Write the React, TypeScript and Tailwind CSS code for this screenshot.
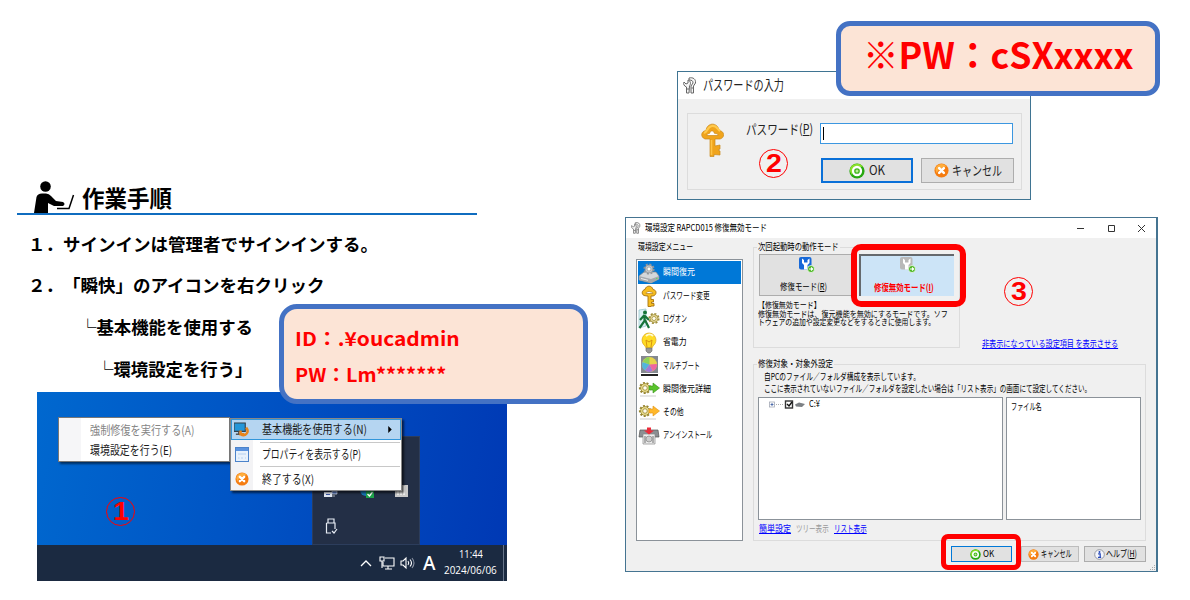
import { useLayoutEffect, useRef, useState, type ReactNode } from "react";

/** A single line of text condensed or widened to a given width. */
function T({ w, className = "", children }: { w: number; className?: string; children: ReactNode }) {
  const ref = useRef<HTMLSpanElement>(null);
  const [scale, setScale] = useState(1);
  useLayoutEffect(() => {
    if (ref.current) setScale(w / ref.current.offsetWidth);
  }, [w]);
  return (
    <span className={`block shrink-0 whitespace-nowrap ${className}`} style={{ width: w }}>
      <span ref={ref} className="inline-block origin-left" style={{ transform: `scaleX(${scale})` }}>
        {children}
      </span>
    </span>
  );
}

const OkIcon = ({ className = "" }: { className?: string }) => (
  <svg viewBox="0 0 16 16" className={className}>
    <circle cx="8" cy="8" r="7.6" fill="#27a810" />
    <path d="M1 6a7.3 7.3 0 0 1 13-2C10 3 5 6 3 12A7 7 0 0 1 1 6Z" fill="#8be02a" />
    <circle cx="8" cy="8" r="4" fill="#3fb51c" stroke="#fff" strokeWidth="2.300" />
    <circle cx="8" cy="8" r="1.500" fill="#b9ec94" />
  </svg>
);
const CancelIcon = ({ className = "" }: { className?: string }) => (
  <svg viewBox="0 0 16 16" className={className}>
    <circle cx="8" cy="8" r="7.5" fill="#f57c10" />
    <path d="M1.5 7a6.7 6.7 0 0 1 12-3.2C9 4 4 7 3 11Z" fill="#ffae3d" />
    <path d="M5.500 5.500l5 5M10.500 5.500l-5 5" stroke="#fff" strokeWidth="2.700" strokeLinecap="round" />
  </svg>
);
const InfoIcon = ({ className = "" }: { className?: string }) => (
  <svg viewBox="0 0 16 16" className={className}>
    <circle cx="8" cy="8" r="7" fill="#f4f6fb" stroke="#8b8f98" strokeWidth="1.3" />
    <circle cx="8" cy="4.3" r="1.4" fill="#2446b8" />
    <path d="M6 7h3v5M5.8 12.3h4.6" stroke="#2446b8" strokeWidth="1.8" fill="none" />
  </svg>
);
const ToolIcon = ({ className = "" }: { className?: string }) => (
  <svg viewBox="0 0 14 17" className={className} fill="#f6f6f6" stroke="#666" strokeWidth="1">
    <path d="M1 5l2 2 2-1 0-3C8 4 8 7 6.500 9L6 16H3.500L3.500 10C1 9 0 7 1 5Z" />
    <path d="M6 1c4-1 7 1 6.500 5L10.500 9v7H8V9l2-3C10 4 9 3 6 3Z" />
    <path d="M8.500 11h2M4 12h2" />
  </svg>
);
const KeyIcon = ({ className = "" }: { className?: string }) => (
  <svg viewBox="0 0 23 34" className={className}>
    <path
      d="M9 16L4 16C-1 14 0 8 5 7.500C6-1 17-1 18 7.500C24 8 24 15 19 16H14V23L19 22V26L17 27L19 28V32L13 31.500V33.500H9Z"
      fill="#f0a41c" stroke="#c98a1c" strokeWidth=".7" />
    <path d="M3 9.500c3 1 3-6 8-6.500s5 3 8 5" stroke="#ffc94c" strokeWidth="2.200" fill="none" />
    <path d="M6 12.500c0-3 3-1 3-3s4-2 4 0 4 0 4 3Z" fill="#fff" stroke="#c98a1c" strokeWidth=".7" />
    <path d="M10.500 17v15" stroke="#ffc445" strokeWidth="1.600" />
  </svg>
);
const Wrench = ({ off = false, className = "" }: { off?: boolean; className?: string }) => (
  <svg viewBox="0 0 17 17" className={className}>
    <rect x="1" y="1" width="12.500" height="12.500" rx="2" fill={off ? "#b9b9b9" : "#1769d8"} />
    <path d="M4 2.500v4.500l2 2v4.500h3.500V9l2-2V2.500L9.500 4v2.500H6V4Z" fill="#fff" />
    <circle cx="13" cy="13" r="3.500" fill="#47b51d" stroke="#fff" strokeWidth=".7" />
    <path d="M11 13h3M13 11.500l1.700 1.500L13 14.500" stroke="#fff" strokeWidth="1.100" fill="none" />
  </svg>
);

const gear = (cx: number, cy: number, r: number, fill: string, line: string) => (
  <g>
    <circle cx={cx} cy={cy} r={r} fill="none" stroke={line} strokeWidth="2.2" strokeDasharray="1.900 1.600" />
    <circle cx={cx} cy={cy} r={r - 0.6} fill={fill} stroke={line} strokeWidth=".8" />
    <circle cx={cx} cy={cy} r={r / 2.2} fill="#fffdf0" stroke={line} strokeWidth=".8" />
  </g>
);
const menuIcons: ReactNode[] = [
  <>
    <path d="M1 14L6 10H18L21 14V17L13 21L1 18Z" fill="#d4d7da" stroke="#888" strokeWidth=".7" />
    <path d="M1 14L13 17V21L1 18ZM13 17L21 14V17L13 21Z" fill="#a4a9ae" />
    <path d="M3 16.500l7 1.800" stroke="#eee" />
    <path d="M18 16.500h1.500" stroke="#5fe35a" />
    {gear(11, 7, 4.5, "#c7cbcf", "#8f959a")}
  </>,
  <>
    <path d="M9 11L6 10.500C3 9 4 5 7 4.500C8 0 14 0 15 4.500C19 5 19 10 15 11H13V14.500H15.500V17H13.500V18.500H16V21H13V21.500H10V11Z" fill="#f7bd20" stroke="#a5720d" strokeWidth=".9" />
    <path d="M8 8.500c0-2 2-1 2-2h2c0 1 3 0 3 2Z" fill="#fff" stroke="#a5720d" strokeWidth=".6" />
  </>,
  <>
    <path d="M1 2L8 1V18L1 20Z" fill="#dcf1f4" stroke="#8fc2ca" strokeWidth=".7" />
    <circle cx="7" cy="4.500" r="2" fill="#167439" />
    <path d="M6.500 7L2 12M6.500 7v6l-5 7M7 12l4 8M7 8l4 4" stroke="#167439" strokeWidth="2.200" fill="none" />
    {gear(16, 10.500, 4.500, "#eee0a0", "#a08f3c")}
  </>,
  <>
    <path d="M7 14C1 9 5 1 11 1S21 9 15 14L14 16H8Z" fill="#ffdc25" stroke="#dda51b" strokeWidth=".7" />
    <path d="M8 4c2-2 5-2 7 0" stroke="#fffbd0" strokeWidth="2" fill="none" />
    <path d="M9 15L8 8l3 2 3-2-1 7" stroke="#d79411" fill="none" />
    <path d="M8 16h6v3l-2 2h-2l-2-2Z" fill="#999" stroke="#666" strokeWidth=".6" />
  </>,
  <>
    <rect x="3" y="1" width="17" height="17" fill="#858990" />
    <circle cx="11.500" cy="9.500" r="7.500" fill="#e8d44a" />
    <path d="M11.500 9.500V2A7.500 7.500 0 0 0 5 7Z" fill="#8bd45a" />
    <path d="M11.500 9.500L4.500 7A7.500 7.500 0 0 0 7 15.500Z" fill="#52b5dc" />
    <path d="M11.500 9.500L7 15.500A7.500 7.500 0 0 0 15 16Z" fill="#a07ad8" />
    <path d="M11.500 9.500L15 16A7.500 7.500 0 0 0 19 9Z" fill="#ef65a0" />
    <path d="M3 20h17" stroke="#222" strokeWidth="2" />
  </>,
  <>
    {gear(7, 10, 5, "#ecdf91", "#96842f")}
    <path d="M11 8h4V5l6.500 5L15 15v-3h-4Z" fill="#59c42b" stroke="#369018" strokeWidth=".6" />
    <path d="M2 18h16" stroke="#dedede" strokeWidth="1.500" />
  </>,
  <>
    {gear(7, 10, 5, "#ecdf91", "#96842f")}
    <path d="M11 8h4V5l6.500 5L15 15v-3h-4Z" fill="#ffb82b" stroke="#e09010" strokeWidth=".6" />
    <path d="M2 18h16" stroke="#dedede" strokeWidth="1.500" />
  </>,
  <>
    <path d="M2 5H20L21 12H1Z" fill="#8c8f93" stroke="#555" strokeWidth=".7" />
    <path d="M5 9h12v10H5Z" fill="#eee" stroke="#888" strokeWidth=".7" />
    <path d="M7 11v7M15 11v7" stroke="#999" strokeWidth="1.500" />
    <circle cx="11" cy="14" r="3" fill="#ccc" stroke="#777" strokeWidth=".6" />
    <path d="M9 2.500h4v3h3l-5 4-5-4h3Z" fill="#ec2c3b" />
  </>,
];

const menu: [string, number][] = [
  ["瞬間復元", 32],
  ["パスワード変更", 47],
  ["ログオン", 24],
  ["省電力", 24],
  ["マルチブート", 37],
  ["瞬間復元詳細", 48],
  ["その他", 21],
  ["アンインストール", 49],
];

function Circled({ n, className }: { n: string; className: string }) {
  return (
    <div className={`absolute flex h-[29px] w-[29px] items-center justify-center rounded-full border-[1.5px] border-[#f00] font-['Liberation_Sans',sans-serif] text-[25px] leading-none font-bold text-[#f00] ${className}`}>
      <T w={16}>{n}</T>
    </div>
  );
}

function Procedure() {
  return (
    <section className="absolute top-0 left-0 flex w-[480px] flex-col font-bold text-black">
      <header className="ml-[17px] flex h-[215px] w-[460px] items-end border-b-2 border-[#0f6cbf]">
        <svg viewBox="0 0 42 32" className="ml-[16px] h-[32px] w-[42px]">
          <circle cx="12.500" cy="5.500" r="5.300" />
          <path d="M1 32L3.500 16Q4.500 12.500 9 12.500H13Q16 12.500 18 15L23 20L30 21Q33 23 30 25H21L15 22V32Z" />
          <path d="M24 27.500H36L40.500 14" fill="none" stroke="#000" strokeWidth="1.500" />
        </svg>
        <T w={90} className="ml-[7px] pb-[5px] text-[22.500px] leading-[22px]">作業手順</T>
      </header>
      <div className="flex h-[41px] items-center pt-[16px] pl-[28px] text-[17.500px] leading-none">
        <T w={350}>１．サインインは管理者でサインインする。</T>
      </div>
      <div className="flex h-[42px] items-center pt-[16px] pl-[28px] text-[17.500px] leading-none">
        <T w={297}>２．「瞬快」のアイコンを右クリック</T>
      </div>
      <div className="flex h-[42px] items-center pt-[16px] pl-[79px] text-[17.500px] leading-none">
        <T w={174}>└基本機能を使用する</T>
      </div>
      <div className="flex h-[42px] items-center pt-[16px] pl-[96px] text-[17.500px] leading-none">
        <T w={157}>└環境設定を行う」</T>
      </div>
    </section>
  );
}

function Desktop() {
  return (
    <section className="absolute top-[392px] left-[37px] flex h-[189px] w-[470px] flex-col justify-end bg-[linear-gradient(100deg,#0068cf_0%,#0053c4_45%,#0038b4_100%)]">
      <div className="absolute top-[44px] left-[275px] flex h-[109px] w-[108px] flex-col border border-[#2c3d5c] bg-[#232f46] px-[11px] pt-[48px]">
        <div className="flex h-[16px] justify-between">
          <svg viewBox="0 0 14 16" className="w-[14px]"><path d="M0 7h8v5H0Z" fill="#dfe6f1" /><path d="M2 9h4v1H2Z" fill="#3c57a0" /><path d="M8 6h5v3H8ZM8 11h3" fill="#5778c0" stroke="#fff" strokeWidth=".6" /></svg>
          <svg viewBox="0 0 16 16" className="w-[16px]"><circle cx="7" cy="5" r="6" fill="#1776b4" /><rect x="7" y="5" width="8" height="8" fill="#1da34a" /><path d="M8.500 9l2 2 3-4" fill="none" stroke="#fff" strokeWidth="1.300" /></svg>
          <svg viewBox="0 0 13 16" className="w-[13px]"><rect y="0" width="13" height="12" fill="#cacaca" /><path d="M3 5v5M6 3v7M9 1v9" stroke="#eee" strokeWidth="2" /></svg>
        </div>
        <svg viewBox="0 0 14 17" className="mt-[17px] h-[17px] w-[14px]" fill="none" stroke="#e8edf5" strokeWidth="1.200"><path d="M4 5V1h6v4M2.500 5h8.500v6M2.500 5v10H7M8 13l2 2 3-4" /></svg>
      </div>
      <div className="absolute top-[25px] left-[21px] flex h-[45px] w-[172px] border border-[#777] bg-white text-[12px] leading-none shadow-[2px_2px_2px_#0008]">
        <div className="w-[22px] bg-[#f6f6f8]" />
        <div className="flex flex-col justify-center gap-[8px] pl-[9px]">
          <T w={104} className="text-[#858585]">強制修復を実行する(A)</T>
          <T w={82} className="text-[#1a1a1a]">環境設定を行う(E)</T>
        </div>
      </div>
      <div className="absolute top-[26px] left-[193px] flex h-[73px] w-[172px] flex-col border border-[#888] bg-white text-[12px] leading-none text-[#1a1a1a] shadow-[2px_2px_2px_#0009]">
        <div className="flex h-[21px] shrink-0 items-center border border-[#3296da] bg-[#b5d5f1] pl-[2px]">
          <svg viewBox="0 0 16 16" className="h-[15px] w-[15px]"><path d="M0 1h12v9H0Z" fill="#2596d8" stroke="#34424d" strokeWidth="1.200" /><path d="M5 10v3M2 13h8" stroke="#555" strokeWidth="1.500" /><path d="M13 6c4 5-1 10-6 7M7 9v4h4" fill="none" stroke="#e8851c" strokeWidth="2.600" /></svg>
          <T w={105} className="ml-[13px] pb-px">基本機能を使用する(N)</T>
          <svg viewBox="0 0 4 8" className="ml-[21px] h-[7px] w-[4px]"><path d="M0 0L4 4L0 8Z" /></svg>
        </div>
        <div className="flex h-[28px] items-center">
          <div className="flex h-full w-[22px] items-center justify-center bg-[#f3f3f5]">
            <svg viewBox="0 0 14 15" className="h-[15px] w-[14px]"><rect x=".5" y=".5" width="13" height="14" fill="#e7f1fc" stroke="#4c83ca" /><path d="M1 1h12v3H1Z" fill="#5b93df" /><path d="M3 7h8M3 11h1.500M6 11h2M10 11h1" stroke="#b5d0f0" /></svg>
          </div>
          <div className="ml-[7px] flex h-[25px] w-[140px] items-center border-y border-[#c8c8c8] pl-[2px]"><T w={99} className="pb-px">プロパティを表示する(P)</T></div>
        </div>
        <div className="flex flex-1 items-center">
          <div className="flex h-full w-[22px] items-center justify-center bg-[#f3f3f5]"><CancelIcon className="h-[14px] w-[14px]" /></div>
          <T w={52} className="ml-[9px] pb-px">終了する(X)</T>
        </div>
      </div>
      <Circled n="1" className="top-[105px] left-[69px]" />
      <footer className="flex h-[36px] items-center bg-[#1b2a41] pl-[323px] text-white">
        <svg viewBox="0 0 12 8" className="h-[8px] w-[12px]" fill="none" stroke="#fff" strokeWidth="1.300"><path d="M1 7L6 2L11 7" /></svg>
        <svg viewBox="0 0 16 14" className="ml-[7px] h-[14px] w-[16px]" fill="none" stroke="#fff" strokeWidth="1.100"><path d="M6 2h9v8H4V6M9 10v3M6 13h7" /><path d="M1 1h4v4H1ZM3 5v7" /></svg>
        <svg viewBox="0 0 15 14" className="ml-[5px] h-[14px] w-[15px]" fill="none" stroke="#fff" strokeWidth="1.100"><path d="M1 5h2l3-3v10L3 9H1ZM8 5q1.500 2 0 4M10 3.500q3 3.500 0 7" /><path d="M12 2q4 5 0 10" stroke="#8a93a3" /></svg>
        <T w={12} className="ml-[8px] font-['Noto_Sans'] text-[19px] leading-none font-medium">A</T>
        <div className="ml-[9px] flex flex-col items-center gap-[6px] pb-[2px] font-['Open_Sans',sans-serif] text-[10.500px] leading-none">
          <T w={24}>11:44</T>
          <T w={53}>2024/06/06</T>
        </div>
        <div className="ml-[6px] h-full w-px bg-[#68758a]" />
      </footer>
    </section>
  );
}

function PasswordDialog() {
  return (
    <section className="absolute top-[71px] left-[677px] flex h-[129px] w-[354px] flex-col border border-[#3f7492] bg-[#f0f0f0] text-[#222]">
      <header className="flex h-[27px] shrink-0 items-center bg-white pl-[5px] text-[13.500px] leading-none">
        <ToolIcon className="h-[17px] w-[14px]" />
        <T w={81} className="ml-[6px] pb-[2px]">パスワードの入力</T>
      </header>
      <div className="mt-[14px] ml-[9px] flex h-[77px] w-[335px] border border-[#dcdcdc]">
        <KeyIcon className="mt-[9px] ml-[13px] h-[34px] w-[23px]" />
        <div className="ml-[22px] flex flex-col">
          <div className="flex h-[30px] items-end text-[13px] leading-none">
            <T w={67} className="mb-[9px]">パスワード(<u>P</u>)</T>
            <div className="ml-[7px] flex h-[21px] w-[193px] items-center border-[1.5px] border-[#3c97e0] bg-white pl-[2px]"><i className="h-[13px] w-px bg-black" /></div>
          </div>
          <div className="mt-[14px] ml-[75px] flex gap-[8px] text-[13px] leading-none">
            <div className="flex h-[25px] w-[92px] items-center justify-center gap-[4px] border-2 border-[#0a70d8] bg-[#e1e1e1]"><OkIcon className="h-[16px] w-[16px]" /><T w={16} className="pb-[3px]">OK</T></div>
            <div className="flex h-[25px] w-[93px] items-center justify-center gap-[3px] border border-[#adadad] bg-[#e1e1e1]"><CancelIcon className="h-[15px] w-[15px]" /><T w={50} className="pb-[2px]">キャンセル</T></div>
          </div>
        </div>
      </div>
      <Circled n="2" className="top-[77px] left-[81px]" />
    </section>
  );
}

function SettingsWindow() {
  return (
    <section className="absolute top-[217px] left-[625px] flex h-[355px] w-[533px] flex-col border border-r-2 border-[#457491] bg-[#f0f0f0] text-[9.500px] leading-none text-black">
      <header className="flex h-[20px] shrink-0 items-center bg-white pl-[5px]">
        <ToolIcon className="h-[12px] w-[10px]" />
        <T w={122} className="ml-[4px]">環境設定 RAPCD015 修復無効モード</T>
        <svg viewBox="0 0 70 9" className="ml-[310px] h-[9px] w-[70px]" fill="none" stroke="#333"><path d="M0 4.500h7M31.500 1.500h6v6h-6ZM61 1l7 7M68 1l-7 7" /></svg>
      </header>
      <div className="flex pl-[10px]">
        <aside className="flex w-[107px] flex-col">
          <div className="flex h-[21px] items-start pt-[4px] pl-[2px]"><T w={55}>環境設定メニュー</T></div>
          <div className="flex h-[282px] flex-col border border-[#8b9299] bg-white px-px pt-px">
            {menu.map(([label, w], i) => (
              <div key={label} className={`flex h-[23.300px] shrink-0 items-center ${i === 0 ? "bg-[#0078d7] text-white" : ""}`}>
                <svg viewBox="0 0 22 22" className="h-[22px] w-[22px]">{menuIcons[i]}</svg>
                <T w={w} className="ml-[3px] pb-px">{label}</T>
              </div>
            ))}
          </div>
        </aside>
        <main className="ml-[10px] flex w-[393px] flex-col pt-[9px]">
          <div className="flex h-[101px] items-end">
            <div className="flex h-[101px] w-[207px] flex-col border border-[#dcdcdc]">
              <div className="-mt-[6px] ml-[3px] h-[10px] w-fit bg-[#f0f0f0] px-px"><T w={81}>次回起動時の動作モード</T></div>
              <div className="mt-[2px] ml-[5px] flex gap-[5px]">
                <div className="flex h-[42px] w-[95px] flex-col items-center justify-between border border-[#adadad] bg-[#e1e1e1] pt-px pb-[4px]">
                  <Wrench className="h-[17px] w-[17px]" /><T w={47} className="-ml-[6px]">修復モード(<u>R</u>)</T>
                </div>
                <div className="flex h-[42px] w-[95px] flex-col items-center justify-between border-t-2 border-l-2 border-[#65696d] bg-[#cce4f7] pb-[4px] font-bold text-[#f00]">
                  <Wrench off className="h-[17px] w-[17px]" /><T w={60} className="-ml-[8px]">修復無効モード(<u>I</u>)</T>
                </div>
              </div>
              <div className="mt-[4px] ml-[4px] flex flex-col text-[8.500px] leading-[8.700px]">
                <T w={63}>【修復無効モード】</T>
                <T w={190}>修復無効モードは、復元機能を無効にするモードです。ソフ</T>
                <T w={177}>トウェアの追加や設定変更などをするときに使用します。</T>
              </div>
            </div>
            <T w={136} className="ml-[22px] text-[#00f] [&>span]:underline">非表示になっている設定項目 を表示させる</T>
          </div>
          <div className="mt-[16px] flex h-[177px] w-[393px] flex-col border border-[#dcdcdc]">
            <div className="-mt-[6px] ml-[3px] h-[10px] w-fit bg-[#f0f0f0] px-px"><T w={75}>修復対象・対象外設定</T></div>
            <div className="mt-[2px] ml-[10px] flex flex-col leading-[11.500px]">
              <T w={156}>自PCのファイル／フォルダ構成を表示しています。</T>
              <T w={327}>ここに表示されていないファイル／フォルダを設定したい場合は「リスト表示」の画面にて設定してください。</T>
            </div>
            <div className="mt-[3px] ml-[4px] flex h-[123px] gap-[3px]">
              <div className="flex w-[245px] items-start border border-[#8b9299] bg-white pt-px pl-[10px]">
                <svg viewBox="0 0 36 11" className="h-[11px] w-[36px]"><rect x=".5" y="3" width="5" height="5" fill="#fff" stroke="#a3a8b5" strokeWidth=".8" /><path d="M1.500 5.500h3M3 4v3" stroke="#3456a0" strokeWidth=".8" /><path d="M7 5.500h8" stroke="#999" strokeWidth=".8" strokeDasharray="1 1" /><rect x="16.500" y="2" width="7" height="7" fill="#fff" stroke="#333" strokeWidth="1.400" /><path d="M18 5l2 2 3-4" fill="none" stroke="#111" strokeWidth="1.400" /><path d="M26 5.500l4-2 6 1.500-3 3-6-.5Z" fill="#7c8084" /></svg>
                <T w={11} className="ml-[4px]">C:¥</T>
              </div>
              <div className="w-[135px] border border-[#8b9299] bg-white pt-[4px] pl-[4px]"><T w={31}>ファイル名</T></div>
            </div>
            <div className="flex h-[17px] items-center gap-[5px] pl-[5px]">
              <T w={32} className="text-[#00f] [&>span]:underline">簡単設定</T>
              <T w={33} className="text-[#999]">ツリー表示</T>
              <T w={33} className="text-[#00f] [&>span]:underline">リスト表示</T>
            </div>
          </div>
          <div className="mt-[5px] flex h-[16px] pl-[198px]">
            <div className="flex w-[61px] items-center justify-center gap-[2px] border border-[#0078d7] bg-[#e1e1e1]"><OkIcon className="h-[11px] w-[11px]" /><T w={11} className="pb-px">OK</T></div>
            <div className="ml-[9px] flex w-[58px] items-center justify-center gap-[2px] border border-[#bdbdbd] bg-[#e1e1e1]"><CancelIcon className="h-[11px] w-[11px]" /><T w={31}>キャンセル</T></div>
            <div className="ml-[5px] flex w-[62px] items-center justify-center gap-px border border-[#adadad] bg-[#e1e1e1]"><InfoIcon className="h-[11px] w-[11px]" /><T w={31}>ヘルプ(<u>H</u>)</T></div>
          </div>
        </main>
      </div>
      <svg viewBox="0 0 6 6" className="absolute right-0 bottom-0 h-[6px] w-[6px]" fill="#aaa"><path d="M4 0h1v1H4ZM4 2h1v1H4ZM4 4h1v1H4ZM2 2h1v1H2ZM2 4h1v1H2ZM0 4h1v1H0Z" /></svg>
      <div className="absolute top-[26px] left-[225px] h-[63px] w-[115px] rounded-[10px] border-[6px] border-[#f00]" />
      <div className="absolute top-[316px] left-[315px] h-[36px] w-[80px] rounded-[7px] border-[5px] border-[#f00]" />
      <Circled n="3" className="top-[59px] left-[378px]" />
    </section>
  );
}

export default function App() {
  return (
    <div lang="ja" className="relative h-[600px] w-[1190px] overflow-hidden bg-white font-['Noto_Sans_CJK_JP',sans-serif] [text-spacing-trim:space-all]">
      <Procedure />
      <Desktop />
      <div className="absolute top-[304px] left-[279px] flex h-[100px] w-[309px] flex-col justify-center gap-[16px] rounded-[18px] border-[5px] border-[#4472c4] bg-[#fce4d6] pt-[4px] pl-[11px] text-[19px] leading-[20px] font-bold text-[#f00]">
        <T w={165}>ID：.¥oucadmin</T>
        <T w={151}>PW：Lm*******</T>
      </div>
      <PasswordDialog />
      <div className="absolute top-[21px] left-[836px] flex h-[75px] w-[324px] items-center rounded-[14px] border-[5px] border-[#4472c4] bg-[#fce4d6] pb-[11px] pl-[22px] text-[36px] leading-none font-bold text-[#f00]">
        <T w={270}>※PW：cSXxxxx</T>
      </div>
      <SettingsWindow />
    </div>
  );
}
